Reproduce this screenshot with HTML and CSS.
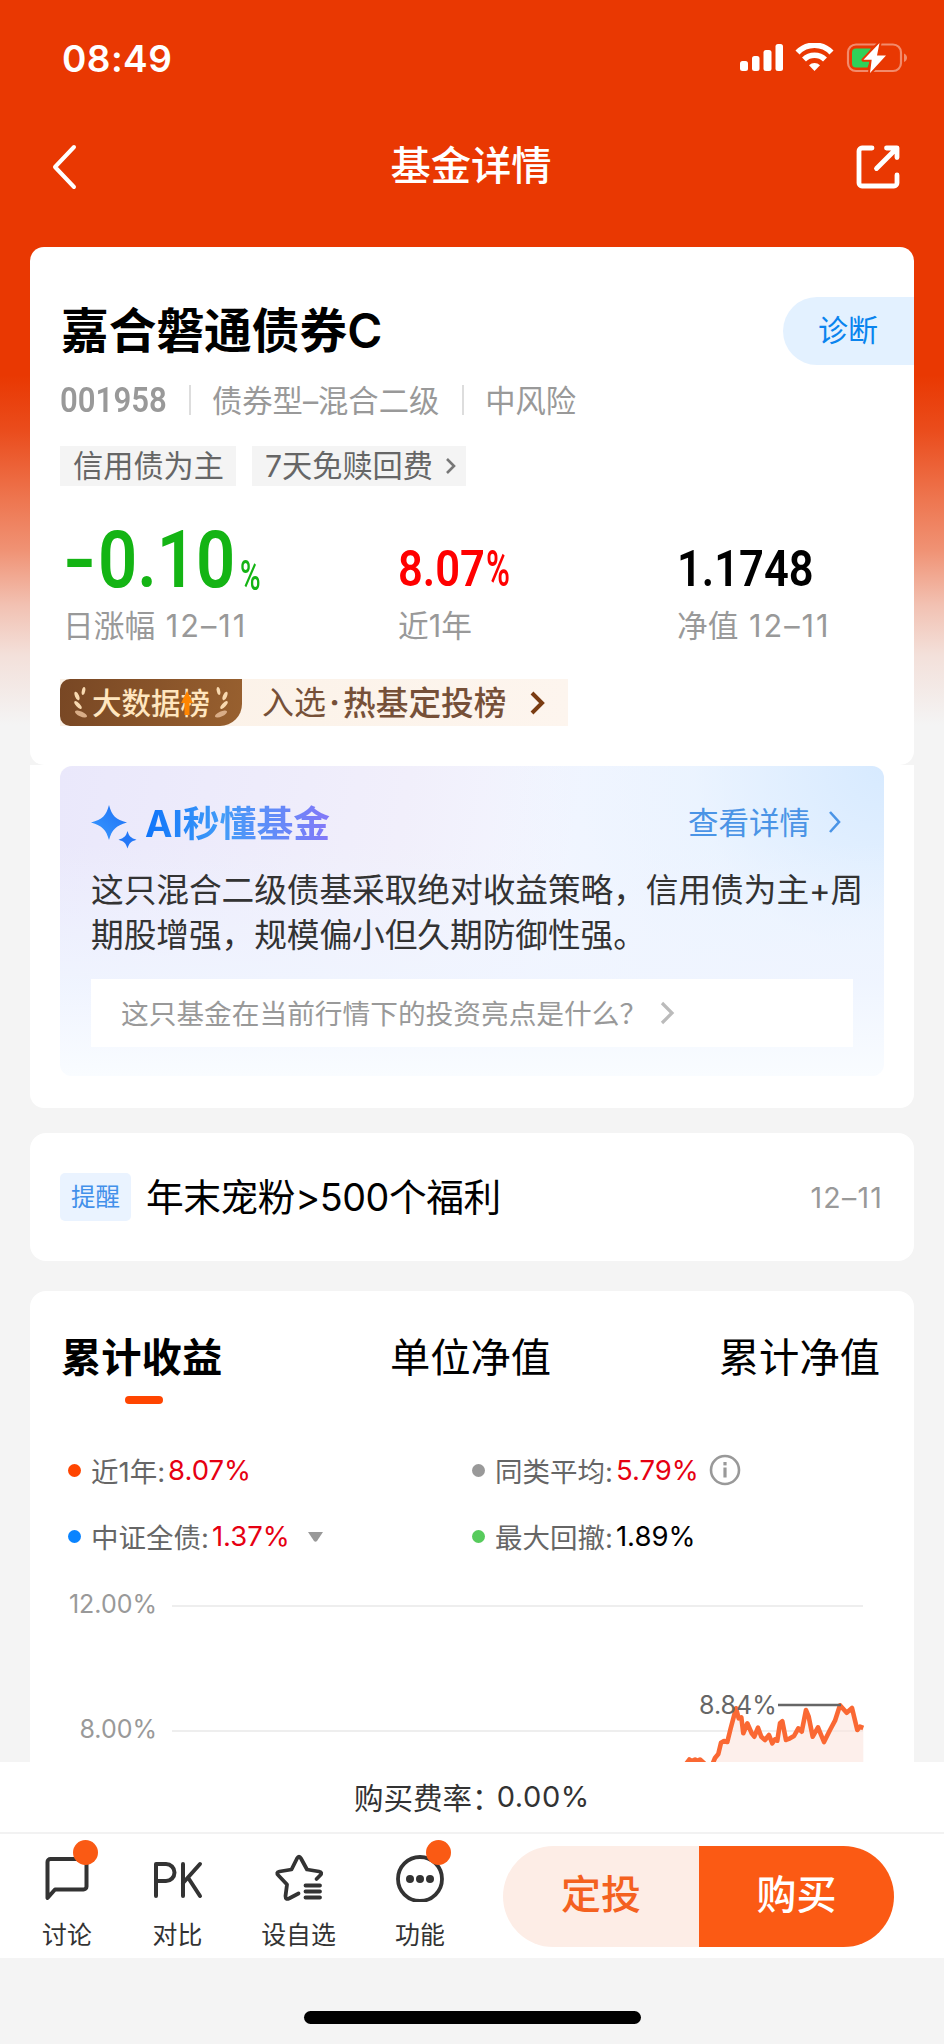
FILE: index.html
```html
<!DOCTYPE html>
<html lang="zh-CN">
<head>
<meta charset="utf-8">
<title>基金详情</title>
<link rel="stylesheet" href="styles.css">
</head>
<body>
<div class="screen">
  <div class="content">
    <div class="status">
      <span class="time">08:49</span>
      <svg class="status-icons" width="170" height="34" viewBox="0 0 170 34" fill="#fff">
        <rect x="2" y="18" width="8" height="10" rx="2.5"/><rect x="14" y="13" width="7.5" height="15" rx="2.5"/><rect x="25.500" y="7" width="8" height="21" rx="2.500"/><rect x="37.500" y="1" width="7.500" height="27" rx="2.500"/>
        <g fill="none" stroke="#fff" stroke-width="5.600"><path d="M59.500 9.500a23.500 23.500 0 0 1 34 0"/><path d="M66 16.500a15 15 0 0 1 21 0"/></g>
        <path d="M76.500 28l-5.500-5.700a8 8 0 0 1 11 0z"/>
        <rect x="110" y="1.500" width="53" height="26.500" rx="8" fill="none" stroke="#fff" stroke-opacity=".42" stroke-width="2.200"/>
        <path d="M166 10.500c4 1.500 4 7 0 8.500z" fill-opacity=".42"/>
        <path d="M118 5.500h15l-8 12h7l-2.500 7H118a4 4 0 0 1-4-4v-11a4 4 0 0 1 4-4z" fill="#30d158"/>
        <path d="M141.500 0L125.500 16.800h8.200L132 30l16-17.500h-9z" stroke="#e93802" stroke-width="4" paint-order="stroke" stroke-linejoin="round"/>
      </svg>
    </div>
    <div class="nav">
      <svg width="26" height="46" viewBox="0 0 26 46" fill="none" stroke="#fff" stroke-width="4" stroke-linecap="round" stroke-linejoin="round"><path d="M23 3L4 23l19 20"/></svg>
      <h1>基金详情</h1>
      <svg width="46" height="46" viewBox="0 0 46 46" fill="none" stroke="#fff" stroke-width="4.800" stroke-linecap="round" stroke-linejoin="round"><path d="M17 4H7a3 3 0 0 0-3 3v32a3 3 0 0 0 3 3h32a3 3 0 0 0 3-3v-8M31.500 4H42v9.500M42 4L21.500 24.500"/></svg>
    </div>

    <section class="card fund">
      <div class="row name-row"><h2>嘉合磐通债券C</h2><span class="diag">诊断</span></div>
      <div class="row meta"><b class="code">001958</b><i></i><span>债券型–混合二级</span><i></i><span>中风险</span></div>
      <div class="row tags">
        <span class="tag">信用债为主</span>
        <span class="tag">7天免赎回费<svg width="11" height="18" viewBox="0 0 11 18" fill="none" stroke="#777" stroke-width="2.600"><path d="M2 2l7 7-7 7"/></svg></span>
      </div>
      <div class="figures">
        <div><p class="num big"><span class="minus">-</span><span class="digits">0.10</span><span class="pct">%</span></p><p class="lab">日涨幅 <span>12–11</span></p></div>
        <div><p class="num red"><span class="digits">8.07</span><span class="pct2">%</span></p><p class="lab">近1年</p></div>
        <div><p class="num"><span class="digits">1.1748</span></p><p class="lab">净值 <span>12–11</span></p></div>
      </div>
      <div class="rank">
        <span class="rank-badge">
          <svg width="15" height="32" viewBox="0 0 15 32" fill="#f8d9b0"><ellipse cx="10.500" cy="4" rx="1.700" ry="4" transform="rotate(12 10.500 4)"/><ellipse cx="4" cy="9" rx="2" ry="4.500" transform="rotate(-22 4 9)"/><ellipse cx="5" cy="18" rx="2" ry="5" transform="rotate(-42 5 18)"/><ellipse cx="8" cy="27" rx="2.500" ry="6.500" transform="rotate(-65 8 27)" fill="#d9ad87"/></svg>
          <span>大数据榜</span>
          <svg class="mirror" width="15" height="32" viewBox="0 0 15 32" fill="#f8d9b0"><ellipse cx="10.500" cy="4" rx="1.700" ry="4" transform="rotate(12 10.500 4)"/><ellipse cx="4" cy="9" rx="2" ry="4.500" transform="rotate(-22 4 9)"/><ellipse cx="5" cy="18" rx="2" ry="5" transform="rotate(-42 5 18)"/><ellipse cx="8" cy="27" rx="2.500" ry="6.500" transform="rotate(-65 8 27)" fill="#d9ad87"/></svg>
          <svg class="arrow" width="12" height="24" viewBox="0 0 12 24" fill="#ff8500"><path d="M6 0l6 12H8.500v12h-5V12H0z"/></svg>
        </span>
        <span class="rank-text">入选<em>·</em><b>热基定投榜</b></span>
        <svg width="15" height="24" viewBox="0 0 15 24" fill="none" stroke="#7a3c12" stroke-width="4"><path d="M2 2l10 10L2 22"/></svg>
      </div>
    </section>

    <section class="card ai">
      <div class="ai-panel">
        <div class="ai-head">
          <svg width="46" height="44" viewBox="0 0 46 44"><defs><linearGradient id="spark" x1="0" y1="1" x2="1" y2="0"><stop offset="0" stop-color="#3a9bff"/><stop offset="1" stop-color="#1d6ff5"/></linearGradient></defs><path fill="url(#spark)" d="M18 0c3 11 6.500 14.500 18 17.500C24.500 21 21 24.500 18 35 15 24.500 11.500 21 0 17.500 11.500 14.500 15 11 18 0z"/><path fill="#2478f7" d="M36.500 26c1.600 5.400 3.400 7 9 8.700-5.600 1.700-7.400 3.400-9 8.800-1.600-5.400-3.400-7.100-9-8.800 5.600-1.700 7.400-3.300 9-8.700z"/></svg>
          <h3>AI秒懂基金</h3>
          <span class="more">查看详情</span>
          <svg width="13" height="24" viewBox="0 0 13 24" fill="none" stroke="#4a94e6" stroke-width="2.600"><path d="M2 2l9 10-9 10"/></svg>
        </div>
        <p class="ai-text">这只混合二级债基采取绝对收益策略，信用债为主+周<br>期股增强，规模偏小但久期防御性强。</p>
        <div class="ask"><span>这只基金在当前行情下的投资亮点是什么？</span><svg width="15" height="24" viewBox="0 0 15 24" fill="none" stroke="#bbb" stroke-width="3.200"><path d="M2 2l10 10L2 22"/></svg></div>
      </div>
    </section>

    <section class="card notice">
      <span class="notice-tag">提醒</span><span class="notice-text">年末宠粉&gt;500个福利</span><span class="date">12–11</span>
    </section>

    <section class="card perf">
      <div class="tabs"><span class="on">累计收益</span><span>单位净值</span><span>累计净值</span></div>
      <div class="legend">
        <div><i class="c1"></i>近1年:<b>8.07%</b></div>
        <div><i class="c2"></i>同类平均:<b>5.79%</b><svg class="info" width="32" height="32" viewBox="0 0 32 32" fill="none" stroke="#999" stroke-width="2.600"><circle cx="16" cy="16" r="14"/><path d="M16 13.500v10" stroke-width="3.200"/><path d="M16 8v3.400" stroke-width="3.200"/></svg></div>
        <div><i class="c3"></i>中证全债:<b>1.37%</b><svg class="tri" width="15" height="10" viewBox="0 0 15 10"><path d="M0 0h15L9 9q-1.500 1.500-3 0z" fill="#999"/></svg></div>
        <div><i class="c4"></i>最大回撤:<b class="blk">1.89%</b></div>
      </div>
      <svg class="chart" width="884" height="182" viewBox="0 0 884 182">
        <path d="M142 26H833M142 151H833" stroke="#eee" stroke-width="2"/>
        <text x="127" y="33" text-anchor="end" class="axis">12.00%</text>
        <text x="127" y="158" text-anchor="end" class="axis">8.00%</text>
        <path fill="#fbe4dd" fill-opacity=".6" d="M683.300 182L685 178 688.300 174 691 162.700 694 161 697.300 162 700.700 148.300 706 128.300 708.700 138.300 711.300 137.300 713.300 153.300 717.300 143.300 721.700 153.300 724.300 156.700 728 147.700 731.300 156.700 735 160 739 155 742.300 163.300 745 159.300 747.300 160.700 750 143.300 752.300 141.300 756 160 760 158.300 764 156 768.300 148.300 771.700 151.700 776 130 778.700 136.700 782.700 156.700 788 147.300 794 162 800 150 805 140.700 810 125.300 816.700 132.700 822 128 827.300 150 830 146.700 833.300 148V182z"/>
        <path class="line" d="M656 184L659.300 179.500 661.700 181 665 179.500 667.300 181 670 179.500 675 184M682.500 184L685 178 688.300 174 691 162.700 694 161 697.300 162 700.700 148.300 706 128.300 708.700 138.300 711.300 137.300 713.300 153.300 717.300 143.300 721.700 153.300 724.300 156.700 728 147.700 731.300 156.700 735 160 739 155 742.300 163.300 745 159.300 747.300 160.700 750 143.300 752.300 141.300 756 160 760 158.300 764 156 768.300 148.300 771.700 151.700 776 130 778.700 136.700 782.700 156.700 788 147.300 794 162 800 150 805 140.700 810 125.300 816.700 132.700 822 128 827.300 150 830 146.700 833.300 148"/>
        <text x="669" y="134" class="peak">8.84%</text>
        <path d="M748 125H811" stroke="#666" stroke-width="2.600"/>
      </svg>
    </section>
  </div>

  <footer>
    <div class="fee">购买费率：<span>0.00%</span></div>
    <div class="bar">
      <div class="act a1"><svg width="48" height="50" viewBox="0 0 48 50" fill="none" stroke="#333" stroke-width="4" stroke-linejoin="round"><path d="M4.500 46V10a3 3 0 0 1 3-3h33a3 3 0 0 1 3 3v24.500a3 3 0 0 1-3 3H12z"/></svg><i class="dot"></i><span>讨论</span></div>
      <div class="act a2"><svg width="50" height="50" viewBox="0 0 50 50" fill="none" stroke="#333" stroke-width="4" stroke-linecap="round" stroke-linejoin="round"><path d="M3 44V12H13a8 8 0 0 1 0 17H3M30 12V44M47 12L30 31M35 25.500L47 44"/></svg><span>对比</span></div>
      <div class="act a3"><svg width="50" height="50" viewBox="0 0 50 50" fill="none" stroke="#333" stroke-width="3.800" stroke-linecap="round" stroke-linejoin="round"><path d="M42.500 27l3.500-3.500q3-3-1-4l-12-2L27 6.500q-2-3.500-4 0l-5.500 11-12 2q-4 1-1 4l8.500 9-1.500 11.500q0 4 3.500 2.500l9.500-5M31.500 33.500H46M31.500 39.500H46M31.500 45.500H46"/></svg><span>设自选</span></div>
      <div class="act a4"><svg width="50" height="50" viewBox="0 0 50 50"><circle cx="25" cy="27" r="22" fill="none" stroke="#333" stroke-width="3.800"/><g fill="#333"><circle cx="15" cy="27" r="4"/><circle cx="25" cy="27" r="4"/><circle cx="35" cy="27" r="4"/></g></svg><i class="dot"></i><span>功能</span></div>
      <div class="buttons"><span class="plan">定投</span><span class="buy">购买</span></div>
    </div>
    <div class="home"><i></i></div>
  </footer>
</div>
</body>
</html>
```
FILE: styles.css
```css
* { box-sizing: border-box; margin: 0; padding: 0; }
body { font-family: Inter, "Noto Sans CJK SC", sans-serif; color: #000; }
svg { display: block; flex: none; }
i, em { font-style: normal; }
.screen { width: 944px; height: 2044px; overflow: hidden; background: #f4f4f4; display: flex; flex-direction: column; }
.content { height: 1762px; overflow: hidden; flex: none; background: linear-gradient(#e93802 0, #e93802 375px, #ea4c1c 430px, #ee7650 500px, #f09274 550px, #f2c1b2 605px, #f3e0da 655px, #f4f4f4 725px); }

.status { height: 104px; padding: 43px 38px 0 62px; display: flex; justify-content: space-between; }
.time { color: #fff; font-size: 37px; font-weight: 600; line-height: 31px; letter-spacing: .4px; }
.status-icons { margin-right: -2px; }
.nav { height: 143px; padding: 0 43px 18px 51px; display: flex; justify-content: space-between; align-items: center; }
.nav h1 { color: #fff; font-size: 40.300px; font-weight: 500; line-height: 50px; margin: -2px 0 0 10px; }

.card { background: #fff; margin: 0 30px; }
.row { display: flex; align-items: center; }
.fund { height: 518px; border-radius: 14px; padding-top: 50px; }
.name-row { height: 68px; justify-content: space-between; padding-left: 31px; }
.name-row h2 { font-size: 47.700px; font-weight: 600; line-height: 60px; }
.diag { width: 131px; height: 68px; line-height: 66px; padding-left: 35px; font-size: 30px; color: #0a84ee; background: #e3f1ff; border-radius: 34px 0 0 34px; }
.meta { height: 70px; padding: 0 0 2px 30px; color: #999; font-size: 30.300px; }
.code { font-family: Roboto, sans-serif; font-weight: 600; font-size: 35px; display: inline-block; width: 106px; padding-top: 2px; transform: scaleX(.89); transform-origin: 0 50%; }
.meta i { width: 2px; height: 30px; background: #ddd; margin: 2px 21px 0 23px; }
.tags { height: 62px; padding-left: 30px; gap: 16px; }
.tag { height: 40px; line-height: 38px; padding: 0 12px 0 13px; background: #f4f4f4; color: #666; font-size: 30.200px; display: flex; align-items: center; gap: 13px; }
.tag + .tag { padding-right: 10px; gap: 12px; }
.figures { display: flex; height: 164px; padding: 0 0 0 33px; }
.figures > div { width: 335px; }
.figures > div:nth-child(2) { width: 279px; }
.figures > div:last-child { width: 200px; }
.num { font-family: Roboto, sans-serif; font-weight: 600; font-size: 50px; height: 104px; display: flex; align-items: flex-end; line-height: 50px; padding-bottom: 7px; white-space: nowrap; }
.num .digits { display: inline-block; transform: scaleX(.87); transform-origin: 0 50%; }
.num.red { color: #f00; }
.num.big { color: #14b414; font-size: 79px; font-weight: 600; line-height: 79px; padding-bottom: 1px; }
.minus { display: inline-block; width: 27px; margin-right: 8px; transform: scaleX(1.150); transform-origin: 0 50%; }
.big .digits { width: 142px; }
.pct, .pct2 { display: inline-block; transform: scaleX(.65); transform-origin: 0 50%; }
.pct { font-size: 43px; line-height: 42px; font-weight: 500; padding-bottom: 4px; width: 24px; }
.red .digits { width: 88px; }
.pct2 { width: 26px; }
.lab { font-size: 30.700px; line-height: 40px; margin-top: 5px; color: #999; }
.lab span { letter-spacing: 2px; margin-left: 2px; }
.rank { height: 47px; width: 508px; margin: 18px 0 0 30px; display: flex; align-items: center; background: linear-gradient(90deg, #fbf1e6, #fdf5ee); }
.rank-badge { position: relative; width: 182px; height: 47px; border-radius: 10px 0 22px 10px; background: linear-gradient(100deg, #784724, #98602f); color: #ffe6bf; font-size: 29.500px; font-weight: 500; display: flex; align-items: center; justify-content: center; gap: 4px; line-height: 46px; }
.mirror { transform: scaleX(-1); }
.arrow { position: absolute; left: 121px; top: 12px; }
.rank-text { margin-left: 20px; width: 268px; color: #765038; font-size: 32px; line-height: 46px; display: flex; }
.rank-text b { font-weight: 500; font-size: 32.700px; }
.rank-text em { width: 17px; text-align: center; font-weight: 700; }

.ai { height: 343px; border-radius: 0 0 14px 14px; padding: 1px 30px 0; }
.ai-panel { height: 310px; border-radius: 12px; padding: 39px 0 0 31px; background: linear-gradient(180deg, rgba(240,245,255,0) 25%, rgba(240,245,255,.9) 70%, #f9fcff 100%), radial-gradient(circle at 100% 0, #d7eaff 0, rgba(231,242,255,.6) 190px, rgba(255,255,255,0) 400px), linear-gradient(100deg, #eae8fb, #f1effb 40%, #f3f6ff 60%, #edf5ff); }
.ai-head { height: 46px; display: flex; align-items: flex-start; }
.ai-head h3 { margin: -4px 0 0 8px; font-size: 36.800px; line-height: 46px; font-weight: 700; background: linear-gradient(90deg, #0e74fa, #429cf8 42%, #8478f8); color: transparent; -webkit-background-clip: text; background-clip: text; }
.more { margin: -3px 18px 0 auto; font-size: 30.500px; line-height: 42px; color: #4a94e6; }
.ai-head svg:last-child { margin: 5px 43px 0 0; }
.ai-text { margin-top: 17px; font-size: 32.700px; line-height: 45px; height: 90px; color: #333; white-space: nowrap; letter-spacing: -.05px; }
.ask { margin-top: 21px; width: 762px; height: 68px; background: #fff; padding: 0 0 2px 30px; display: flex; align-items: center; font-size: 27.700px; color: #999; }
.ask svg { margin: 2px 0 0 13px; }

.notice { margin-top: 25px; height: 128px; border-radius: 16px; padding: 0 31px 0 30px; display: flex; align-items: center; }
.notice-tag { width: 71px; height: 48px; border-radius: 5px; background: #eaf3ff; color: #4290ea; font-size: 24.500px; line-height: 48px; text-align: center; }
.notice-text { margin-left: 15px; font-size: 37.700px; line-height: 50px; letter-spacing: -.4px; }
.date { margin-left: auto; color: #999; font-size: 28.500px; letter-spacing: 1.200px; }

.perf { margin-top: 30px; height: 560px; border-radius: 16px 16px 0 0; padding-top: 38px; }
.tabs { display: flex; justify-content: space-between; padding: 0 34px 0 31px; height: 78px; font-size: 40.300px; line-height: 58px; }
.tabs .on { font-weight: 700; position: relative; }
.tabs .on::after { content: ""; position: absolute; left: 64px; top: 67px; width: 38px; height: 8px; border-radius: 4px; background: #ff4500; }
.legend { margin-top: 30px; display: grid; grid-template-columns: 404px 1fr; grid-auto-rows: 66px; padding-left: 38px; font-size: 27.500px; color: #666; }
.legend div { display: flex; align-items: center; }
.legend b { font-weight: 400; color: #e60012; margin-left: 3px; letter-spacing: 0; }
.legend b.blk { color: #000; }
.legend i { width: 13px; height: 13px; border-radius: 50%; margin-right: 10px; }
.c1 { background: #ff4500; } .c2 { background: #999; } .c3 { background: #0a84ff; } .c4 { background: #57cb5c; }
.info { margin-left: 10px; }
.tri { margin-left: 18px; margin-top: 2px; }
.chart { margin-top: 11px; }
.axis { font-size: 25px; fill: #999; }
.peak { font-size: 25px; fill: #666; }
.line { fill: none; stroke: #fa6833; stroke-width: 4.600; stroke-linejoin: round; }

footer { height: 282px; flex: none; }
.fee { height: 70px; background: #fff; display: flex; justify-content: center; align-items: center; padding-bottom: 2px; font-size: 29.500px; color: #333; }
.fee span { margin-left: -5px; font-size: 29px; letter-spacing: .6px; }
.bar { height: 126px; border-top: 2px solid #f2f2f2; background: #fff; display: flex; padding: 0 50px 0 29px; }
.act { position: relative; display: flex; flex-direction: column; align-items: center; padding-top: 18px; font-size: 24.900px; line-height: 36px; color: #333; }
.act span { margin-top: 15px; white-space: nowrap; }
.a1 { width: 76px; } .a2 { width: 145px; } .a3 { width: 97px; } .a4 { width: 146px; }
.dot { position: absolute; width: 25px; height: 25px; border-radius: 50%; background: #fa5a14; top: 6px; left: 44px; }
.a4 .dot { left: 79px; }
.buttons { margin: 12px 0 0 auto; display: flex; width: 391px; height: 101px; border-radius: 51px; overflow: hidden; font-size: 40px; font-weight: 500; line-height: 98px; text-align: center; }
.plan { width: 196px; background: #fdede6; color: #f4611f; }
.buy { flex: 1; background: #fb5a14; color: #fff; }
.home { height: 86px; padding-top: 53px; display: flex; justify-content: center; align-items: flex-start; }
.home i { width: 337px; height: 13px; border-radius: 7px; background: #000; }
```
